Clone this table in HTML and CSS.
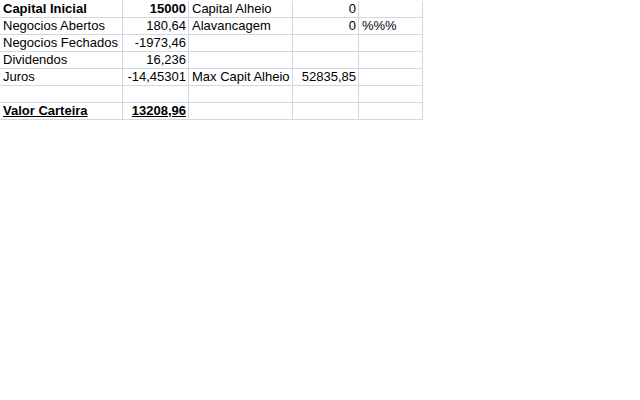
FILE: index.html
```html
<!DOCTYPE html>
<html lang="pt">
<head>
    <meta charset="UTF-8">
    <title>Carteira</title>
    <link rel="stylesheet" href="styles.css">
</head>
<body>
    <div class="sheet">
        <div class="cell bold">Capital Inicial</div>
        <div class="cell num bold">15000</div>
        <div class="cell">Capital Alheio</div>
        <div class="cell num">0</div>
        <div class="cell"></div>

        <div class="cell">Negocios Abertos</div>
        <div class="cell num">180,64</div>
        <div class="cell">Alavancagem</div>
        <div class="cell num">0</div>
        <div class="cell">%%%</div>

        <div class="cell">Negocios Fechados</div>
        <div class="cell num">-1973,46</div>
        <div class="cell"></div>
        <div class="cell"></div>
        <div class="cell"></div>

        <div class="cell">Dividendos</div>
        <div class="cell num">16,236</div>
        <div class="cell"></div>
        <div class="cell"></div>
        <div class="cell"></div>

        <div class="cell">Juros</div>
        <div class="cell num">-14,45301</div>
        <div class="cell">Max Capit Alheio</div>
        <div class="cell num">52835,85</div>
        <div class="cell"></div>

        <div class="cell"></div>
        <div class="cell"></div>
        <div class="cell"></div>
        <div class="cell"></div>
        <div class="cell"></div>

        <div class="cell bold under">Valor Carteira</div>
        <div class="cell num bold under">13208,96</div>
        <div class="cell"></div>
        <div class="cell"></div>
        <div class="cell"></div>
    </div>
</body>
</html>
```

FILE: styles.css
```css
body {
    margin: 0;
    background: #fff;
    font-family: "Liberation Sans", Arial, sans-serif;
    font-size: 13px;
    color: #000;
}

.sheet {
    display: grid;
    grid-template-columns: 122px 65px 103px 65px 63px;
    grid-template-rows: repeat(7, 16px);
    gap: 1px;
    width: max-content;
    background: #d0d7e5;
    border-top: 1px solid #fff;
    padding: 0 1px 1px 0;
}

.cell {
    background: #fff;
    line-height: 16px;
    padding: 0 2px 0 3px;
    white-space: nowrap;
    overflow: hidden;
}

.num {
    text-align: right;
}

.bold {
    font-weight: bold;
}

.under {
    text-decoration: underline;
}
```
